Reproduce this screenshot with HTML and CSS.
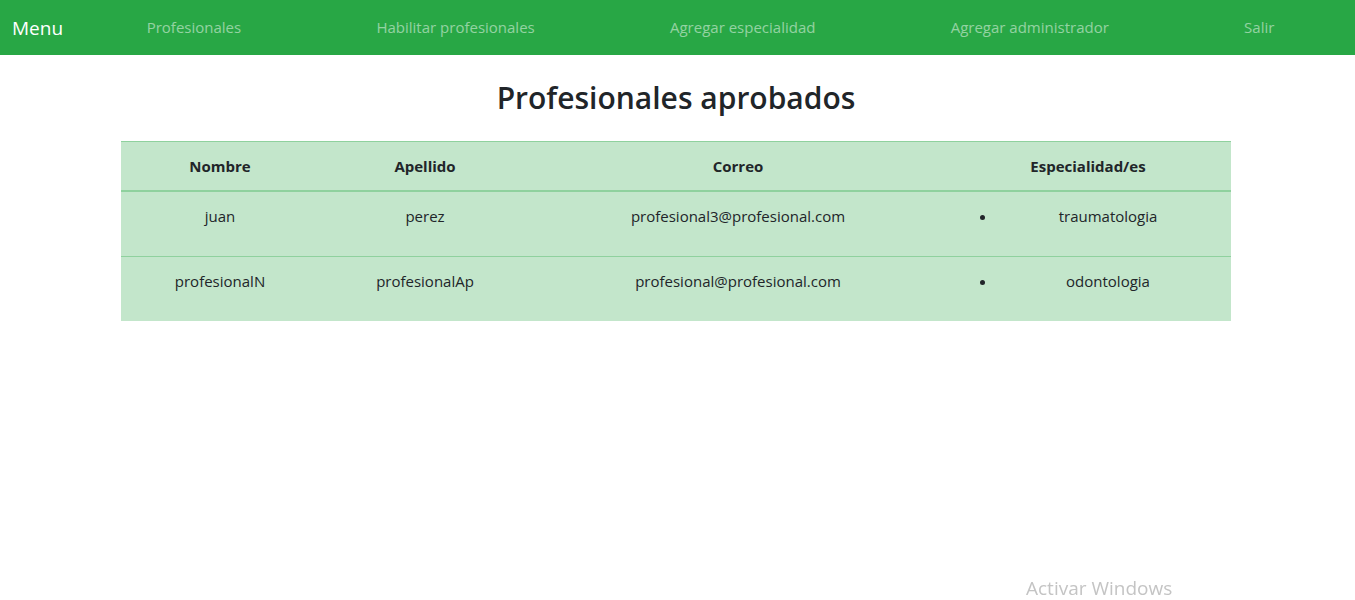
FILE: index.html
```html
<!DOCTYPE html>
<html lang="es">
<head>
<meta charset="utf-8">
<title>Profesionales aprobados</title>
<link rel="stylesheet" href="styles.css">
</head>
<body>
<nav class="navbar">
  <a class="brand" href="#">Menu</a>
  <ul class="nav">
    <li class="nav-item"><a href="#">Profesionales</a></li>
    <li class="nav-item"><a href="#">Habilitar profesionales</a></li>
    <li class="nav-item"><a href="#">Agregar especialidad</a></li>
    <li class="nav-item"><a href="#">Agregar administrador</a></li>
    <li class="nav-item"><a href="#">Salir</a></li>
  </ul>
</nav>
<div class="page">
  <main class="container">
    <h2 class="title">Profesionales aprobados</h2>
    <table class="table">
      <colgroup>
        <col class="c1"><col class="c2"><col class="c3"><col class="c4">
      </colgroup>
      <thead>
        <tr><th>Nombre</th><th>Apellido</th><th>Correo</th><th>Especialidad/es</th></tr>
      </thead>
      <tbody>
        <tr><td>juan</td><td>perez</td><td>profesional3@profesional.com</td><td><ul><li>traumatologia</li></ul></td></tr>
        <tr><td>profesionalN</td><td>profesionalAp</td><td>profesional@profesional.com</td><td><ul><li>odontologia</li></ul></td></tr>
      </tbody>
    </table>
  </main>
</div>
<div class="watermark">Activar Windows</div>
</body>
</html>
```

FILE: styles.css
```css
* { box-sizing: border-box; }
body {
  margin: 0;
  font-family: "Open Sans", "Noto Sans", sans-serif;
  font-size: 15px;
  line-height: 24px;
  color: #212529;
  background: #fff;
}
.navbar {
  display: flex;
  align-items: center;
  height: 55px;
  background: #28a745;
  padding: 0 13px 0 12px;
}
.brand {
  color: #fff;
  font-size: 19px;
  text-decoration: none;
  margin-right: 16px;
}
.nav {
  display: flex;
  flex: 1;
  list-style: none;
  margin: 0;
  padding: 0;
}
.nav-item {
  flex: 1 1 auto;
  text-align: center;
}
.nav-item a {
  display: block;
  padding: 7px 8px 9px;
  color: rgba(255,255,255,.5);
  text-decoration: none;
}
.page {
  padding-right: 3px;
}
.container {
  width: 1140px;
  margin: 0 auto;
  padding: 0 15px;
}
.title {
  margin: 23px 0 24px;
  text-align: center;
  font-size: 30px;
  font-weight: 600;
  line-height: 39px;
}
.table {
  width: 100%;
  border-collapse: collapse;
  table-layout: fixed;
  background: #c3e6cb;
}
.c1 { width: 198px; }
.c2 { width: 212px; }
.c3 { width: 414px; }
.c4 { width: 286px; }
.table th, .table td {
  padding: 12px;
  text-align: center;
  vertical-align: top;
  border-top: 1px solid #8fd19e;
}
.table th {
  font-weight: 700;
  vertical-align: bottom;
  border-bottom: 2px solid #8fd19e;
}
.table td ul {
  margin: 0 0 16px;
  padding-left: 40px;
}
.watermark {
  position: fixed;
  left: 1026px;
  top: 576px;
  font-size: 19px;
  color: #c4c4c4;
}
```
